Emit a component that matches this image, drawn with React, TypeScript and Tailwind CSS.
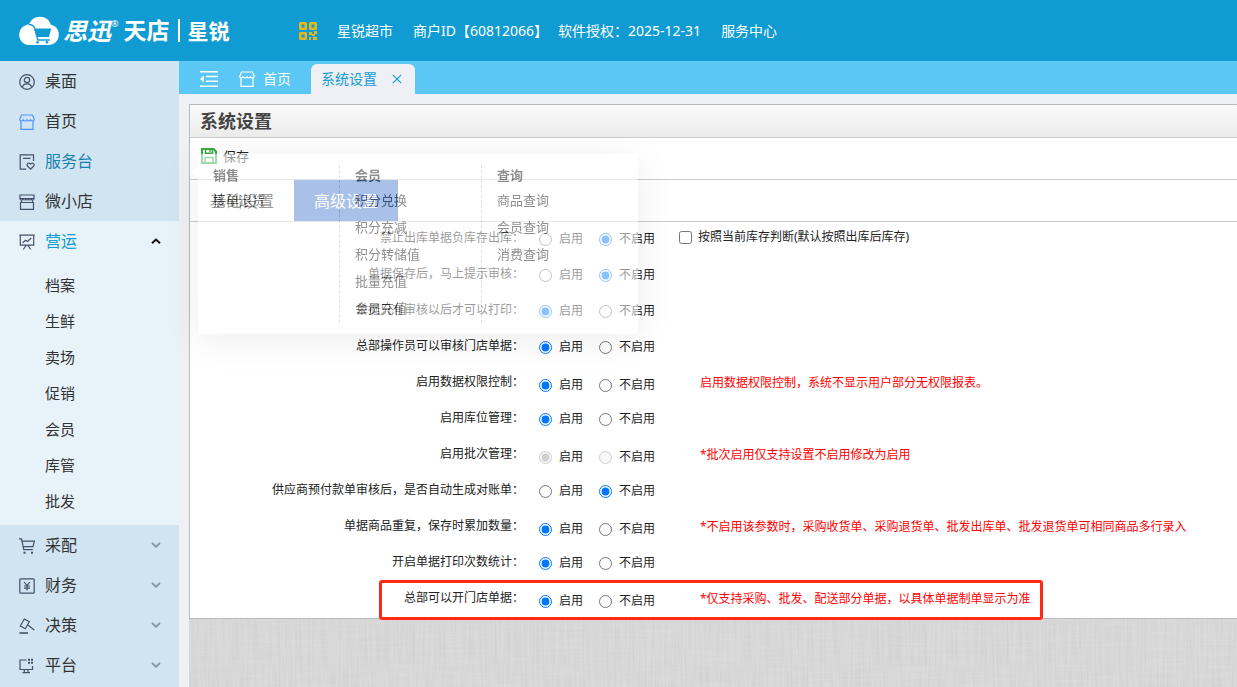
import React from "react";

interface Setting {
  label: string;
  value: "on" | "off";
  hint?: string;
  disabled?: boolean;
  checkbox?: string;
  marked?: boolean;
}

const settings: Setting[] = [
  { label: "禁止出库单据负库存出库", value: "off", checkbox: "按照当前库存判断(默认按照出库后库存)" },
  { label: "单据保存后，马上提示审核", value: "off" },
  { label: "单据只有审核以后才可以打印", value: "on" },
  { label: "总部操作员可以审核门店单据", value: "on" },
  { label: "启用数据权限控制", value: "on", hint: "启用数据权限控制，系统不显示用户部分无权限报表。" },
  { label: "启用库位管理", value: "on" },
  { label: "启用批次管理", value: "on", disabled: true, hint: "*批次启用仅支持设置不启用修改为启用" },
  { label: "供应商预付款单审核后，是否自动生成对账单", value: "off" },
  {
    label: "单据商品重复，保存时累加数量",
    value: "on",
    hint: "*不启用该参数时，采购收货单、采购退货单、批发出库单、批发退货单可相同商品多行录入",
  },
  { label: "开启单据打印次数统计", value: "on" },
  { label: "总部可以开门店单据", value: "on", hint: "*仅支持采购、批发、配送部分单据，以具体单据制单显示为准", marked: true },
];

const flyout = [
  { title: "销售", items: ["接单退货"] },
  { title: "会员", items: ["积分兑换", "积分充减", "积分转储值", "批量充值", "会员充值"] },
  { title: "查询", items: ["商品查询", "会员查询", "消费查询"] },
];

const subMenu = ["档案", "生鲜", "卖场", "促销", "会员", "库管", "批发"];

const Icon: React.FC<{ className?: string; children: React.ReactNode }> = ({ className = "", children }) => (
  <svg viewBox="0 0 16 16" className={`h-4 w-4 shrink-0 ${className}`} fill="none" stroke="currentColor" strokeWidth="1.2">
    {children}
  </svg>
);

const shopPath = (
  <>
    <path d="M2.500 1h11l1.700 4c0 1.300-.8 2-1.900 2s-1.800-.9-1.800-1.800C11.500 6.100 10.700 7 9.800 7S8 6.100 8 5.200C8 6.100 7.100 7 6.200 7s-1.800-.9-1.800-1.800C4.400 6.100 3.600 7 2.700 7S.8 6.300.8 5z" />
    <path d="M2 7v8.300h12V7" />
  </>
);

const icons = {
  desktop: (
    <Icon>
      <circle cx="8" cy="8" r="7.300" />
      <circle cx="8" cy="6" r="2.700" />
      <path d="M3.400 13.500c.3-2.500 2-3.700 4.600-3.700s4.300 1.200 4.600 3.700" />
    </Icon>
  ),
  home: <Icon className="text-[#4d94ff]">{shopPath}</Icon>,
  service: (
    <Icon>
      <path d="M14.500 7V.8H1.200v14.400h6M4 4.300h7.500" />
      <path d="M11.600 15.200 8.500 12c-1.300-1.700.9-4 3.100-1.900 2.200-2.100 4.400.2 3.100 1.900z" />
    </Icon>
  ),
  shop: (
    <Icon>
      <path d="M1 1h14v3.500H1zM1 4.500c0 2 2.800 2 2.800 0 0 2 2.800 2 2.800 0 0 2 2.800 2 2.800 0 0 2 2.800 2 2.800 0 0 2 2.800 2 2.800 0M1.500 8.500h13v6.900h-13zM2.500 6v2.500M13.500 6v2.500" />
    </Icon>
  ),
  board: (
    <Icon>
      <path d="M.3 1.200h15.400M1.300 1.200v10h13.400v-10M3.500 9l3-2.800 2 1.300L12.300 4M7 11.500l-2.700 4M9 11.500l2.700 4" />
    </Icon>
  ),
  cart: (
    <Icon>
      <path d="M0 .8h2.500l2.300 10.800h9M3.200 3.200h12.200l-1.400 5.500H4.300" />
      <path d="M4.500 14.800h2M12 14.800h2" strokeWidth="2" />
    </Icon>
  ),
  money: (
    <Icon>
      <rect x=".8" y=".8" width="14.400" height="14.400" rx="1" />
      <path d="m5.200 4 2.800 3.500L10.800 4M8 7.500v5M5 8h6M5 10.200h6" />
    </Icon>
  ),
  gavel: (
    <Icon>
      <path d="m5.300 1 5 2.800-4 7-5-2.800zM8.800 7l6.500 5" />
      <path d="M.5 15h8.500" strokeWidth="1.600" />
    </Icon>
  ),
  platform: (
    <Icon>
      <path d="M7.500 2H1v9.500h12.500V8M5.300 11.500v3M9 11.500v3M3.500 14.700h7.500" />
      <path d="M9 1.700h2M12 1.700h2M9 4.800h2M12 4.800h2" strokeWidth="2" />
    </Icon>
  ),
};

const topMenu = [
  { label: "桌面", icon: icons.desktop },
  { label: "首页", icon: icons.home },
  { label: "服务台", icon: icons.service, active: true },
  { label: "微小店", icon: icons.shop },
];

const bottomMenu = [
  { label: "采配", icon: icons.cart },
  { label: "财务", icon: icons.money },
  { label: "决策", icon: icons.gavel },
  { label: "平台", icon: icons.platform },
];

const Header = () => (
  <header className="flex h-[61px] items-center bg-[#109cd2] pl-[19px] text-sm text-white">
    <a href="#" className="flex w-[280px] shrink-0 items-center whitespace-nowrap">
      <svg viewBox="0 0 40 30" className="h-[30px] w-10 shrink-0">
        <path
          fill="#fff"
          d="M10 8.500C12 3.500 16 .8 21 .8c5.500 0 9.500 3.200 10.800 8 4.800.8 8 4.700 8 9.700C39.800 25 35 29 29 29H10C4.500 29 .2 24.500.2 18.700.2 13.500 4.300 9 10 8.500z"
        />
        <path fill="none" stroke="#109cd2" strokeWidth="1.300" d="M10 8.500c3 0 4.800 1.200 5.500 3.500l3.300 12h12" />
        <path fill="#109cd2" d="M15.500 12.500h16.700l-2.200 8.500H17.600z" />
        <circle cx="18.500" cy="26.200" r="1.300" fill="#109cd2" />
        <circle cx="28" cy="26.200" r="1.300" fill="#109cd2" />
      </svg>
      <span className="ml-1 text-2xl font-bold italic">思迅</span>
      <span className="mb-3 text-[9px]">®</span>
      <span className="ml-[5px] text-[23px] font-bold">天店</span>
      <span className="mx-2 h-[23px] w-0.5 bg-white" />
      <span className="text-[21px] font-bold">星锐</span>
    </a>
    <svg viewBox="0 0 18 18" className="mr-5 h-[18px] w-[18px] shrink-0" fill="#e5b81c">
      <path
        fillRule="evenodd"
        d="M0 1.500Q0 0 1.500 0h5Q8 0 8 1.500v5Q8 8 6.500 8h-5Q0 8 0 6.500zM2.500 2.500v3h3v-3zM10 1.500Q10 0 11.500 0h5Q18 0 18 1.500v5Q18 8 16.500 8h-5Q10 8 10 6.500zm2.500 1v3h3v-3zM0 11.500Q0 10 1.500 10h5Q8 10 8 11.500v5Q8 18 6.500 18h-5Q0 18 0 16.500zm2.500 1v3h3v-3z"
      />
      <path d="M10 10h3v3h-3zM15 9h3v3h-3zM13 12h3v2h-3zM10 15h2v3h-2zM14 15h4v3h-4z" />
    </svg>
    <div className="flex gap-5 whitespace-nowrap">
      <span>星锐超市</span>
      <div className="flex gap-2.5">
        <span>商户ID【60812066】</span>
        <span>软件授权：2025-12-31</span>
      </div>
      <a href="#">服务中心</a>
    </div>
  </header>
);

const Sidebar = () => (
  <nav className="w-[179px] shrink-0 bg-[#d0e4f1] text-base text-[#333]">
    {topMenu.map((item) => (
      <a key={item.label} href="#" className="flex h-10 items-center gap-[10px] pl-[19px]">
        <span className="pt-0.5 text-[#45506a]">{item.icon}</span>
        <span className={item.active ? "text-[#1682ad]" : ""}>{item.label}</span>
      </a>
    ))}
    <div className="bg-[#e7f2f9] pb-1.5">
      <button type="button" className="flex h-10 w-full items-center gap-[10px] pl-[19px] pr-[18px]">
        <span className="pt-0.5 text-[#45506a]">{icons.board}</span>
        <span className="text-[#109cd2]">营运</span>
        <svg viewBox="0 0 10 6" className="ml-auto h-1.5 w-2.5" fill="none" stroke="#111" strokeWidth="2">
          <path d="M1 5.200 5 1.500l4 3.700" />
        </svg>
      </button>
      <ul className="pt-1.5">
        {subMenu.map((label) => (
          <li key={label}>
            <a href="#" className="block pl-[45px] text-[15px] leading-9">
              {label}
            </a>
          </li>
        ))}
      </ul>
    </div>
    {bottomMenu.map((item) => (
      <button key={item.label} type="button" className="flex h-10 w-full items-center gap-[10px] pl-[19px] pr-[18px]">
        <span className="pt-0.5 text-[#45506a]">{item.icon}</span>
        <span>{item.label}</span>
        <svg viewBox="0 0 10 6" className="ml-auto h-1.5 w-2.5" fill="none" stroke="#8a9ba8" strokeWidth="2">
          <path d="m1 1 4 3.700L9 1" />
        </svg>
      </button>
    ))}
  </nav>
);

const TabBar = () => (
  <div className="flex h-[33px] items-end bg-[#5bc7f5] pl-5 text-sm text-white">
    <button type="button" aria-label="收起菜单" className="flex h-[30px] items-center">
      <svg viewBox="0 0 20 16" className="h-4 w-5" fill="none" stroke="#fff" strokeWidth="1.500">
        <path d="M1 .8h18M7 5.500h12M7 10.300h12M1 15.200h18" />
        <path fill="#fff" stroke="none" d="M4.800 4.500v7L1 8z" />
      </svg>
    </button>
    <a href="#" className="ml-5 flex h-[30px] items-center gap-2">
      <Icon>{shopPath}</Icon>
      首页
    </a>
    <div className="ml-5 flex h-[30px] items-center gap-[15px] rounded-t-md bg-[#eff0f5] pl-[10px] pr-[13px] text-[#109cd2]">
      系统设置
      <button type="button" aria-label="关闭">
        <svg viewBox="0 0 10 10" className="h-2.5 w-2.5" fill="none" stroke="currentColor" strokeWidth="1.200">
          <path d="m.8.8 8.400 8.400M9.200.8.8 9.200" />
        </svg>
      </button>
    </div>
  </div>
);

const SettingRow: React.FC<{ item: Setting; index: number }> = ({ item, index }) => {
  const id = `setting-${index}`;
  return (
    <div role="radiogroup" aria-labelledby={id} className="relative flex h-9 items-start whitespace-nowrap">
      <span id={id} className="w-[334px] shrink-0 text-right leading-8">
        {item.label}：
      </span>
      <div className={`ml-[15px] flex w-[140px] shrink-0 items-center gap-4 ${item.hint ? "h-[38px]" : "h-[34px]"}`}>
        <label className="flex items-center gap-[7px]">
          <input type="radio" name={id} defaultChecked={item.value === "on"} disabled={item.disabled} />
          启用
        </label>
        <label className="flex items-center gap-[7px]">
          <input type="radio" name={id} defaultChecked={item.value === "off"} disabled={item.disabled} />
          不启用
        </label>
      </div>
      {item.checkbox && (
        <label className="flex h-[30px] items-center gap-1.5">
          <input type="checkbox" />
          {item.checkbox}
        </label>
      )}
      {item.hint && <span className="pl-[21px] leading-[34px] text-[#f00]">{item.hint}</span>}
      {item.marked && (
        <div className="pointer-events-none absolute -top-0.5 left-[189px] z-10 h-10 w-[664px] rounded-[3px] border-3 border-[#ff2a14]" />
      )}
    </div>
  );
};

const Flyout = () => (
  <div className="absolute left-2 top-[49px] flex h-[180px] w-[440px] rounded-xs bg-white py-[11px] text-[13px] text-[#333] opacity-55 shadow-[0_6px_40px_rgba(0,0,0,0.14)]">
    <svg viewBox="0 0 6 12" className="absolute -left-1.5 top-3 h-3 w-1.5" fill="#fff">
      <path d="M6 0v12L0 6z" />
    </svg>
    {flyout.map((group) => (
      <div key={group.title} className="w-[142px] border-r border-dashed border-[#ccc] pl-[15px] last:border-r-0">
        <h3 className="h-[22px] font-bold leading-5">{group.title}</h3>
        <ul>
          {group.items.map((name) => (
            <li key={name}>
              <a href="#" className="block leading-[27px]">
                {name}
              </a>
            </li>
          ))}
        </ul>
      </div>
    ))}
  </div>
);

const SettingsPanel = () => (
  <section className="relative border-l border-t border-[#bbb] bg-white">
    <h1 className="h-[33px] border-b border-[#ccc] bg-linear-to-b from-[#fafafa] to-[#ececec] pl-[10px] text-lg font-bold leading-8 text-[#444]">
      系统设置
    </h1>
    <div className="flex h-[42px] items-start border-b border-[#ccc] pl-[11px] pt-2">
      <button type="button" className="flex items-center gap-1.5 text-[13px] leading-5">
        <svg viewBox="0 0 16 16" className="h-4 w-4" fill="none" stroke="#3aa845" strokeWidth="2">
          <path d="M1 1h11.500L15 3.500V15H1z" />
          <path d="M4.500 1v4.200h7V1M4 15V9.500h8V15M9 2v2" strokeWidth="1.500" />
        </svg>
        保存
      </button>
    </div>
    <div className="flex h-[42px] border-b border-[#ccc] text-base">
      <button type="button" className="w-[104px]">
        基础设置
      </button>
      <button type="button" className="w-[104px] bg-[#4075d0] text-white">
        高级设置
      </button>
    </div>
    <form className="text-xs">
      {settings.map((item, i) => (
        <SettingRow key={item.label} item={item} index={i} />
      ))}
    </form>
    <Flyout />
  </section>
);

// woven linen backdrop below the panel
const Linen = () => (
  <div className="relative flex-1 overflow-hidden border-t border-[#bbb] bg-[#d9d9d9]">
    <svg aria-hidden="true" className="absolute inset-0 h-full w-full opacity-15">
      <filter id="warp" x="0" y="0" width="100%" height="100%">
        <feTurbulence type="fractalNoise" baseFrequency="0.5 0.02" numOctaves="2" seed="3" />
        <feColorMatrix values="0 0 0 0 0  0 0 0 0 0  0 0 0 0 0  .5 0 0 0 -.17" />
      </filter>
      <filter id="weft" x="0" y="0" width="100%" height="100%">
        <feTurbulence type="fractalNoise" baseFrequency="0.02 0.5" numOctaves="2" seed="8" />
        <feColorMatrix values="0 0 0 0 1  0 0 0 0 1  0 0 0 0 1  .9 0 0 0 -.35" />
      </filter>
      <rect width="100%" height="100%" filter="url(#warp)" />
      <rect width="100%" height="100%" filter="url(#weft)" />
    </svg>
  </div>
);

export default function App() {
  return (
    <div className="flex min-h-screen flex-col overflow-hidden font-['Noto_Sans','Noto_Sans_CJK_SC',sans-serif] text-[#222]">
      <Header />
      <div className="flex flex-1">
        <Sidebar />
        <div className="flex min-w-0 flex-1 flex-col bg-[#eff0f5]">
          <TabBar />
          <main className="flex flex-1 flex-col pl-[10px] pt-[10px]">
            <SettingsPanel />
            <Linen />
          </main>
        </div>
      </div>
    </div>
  );
}
